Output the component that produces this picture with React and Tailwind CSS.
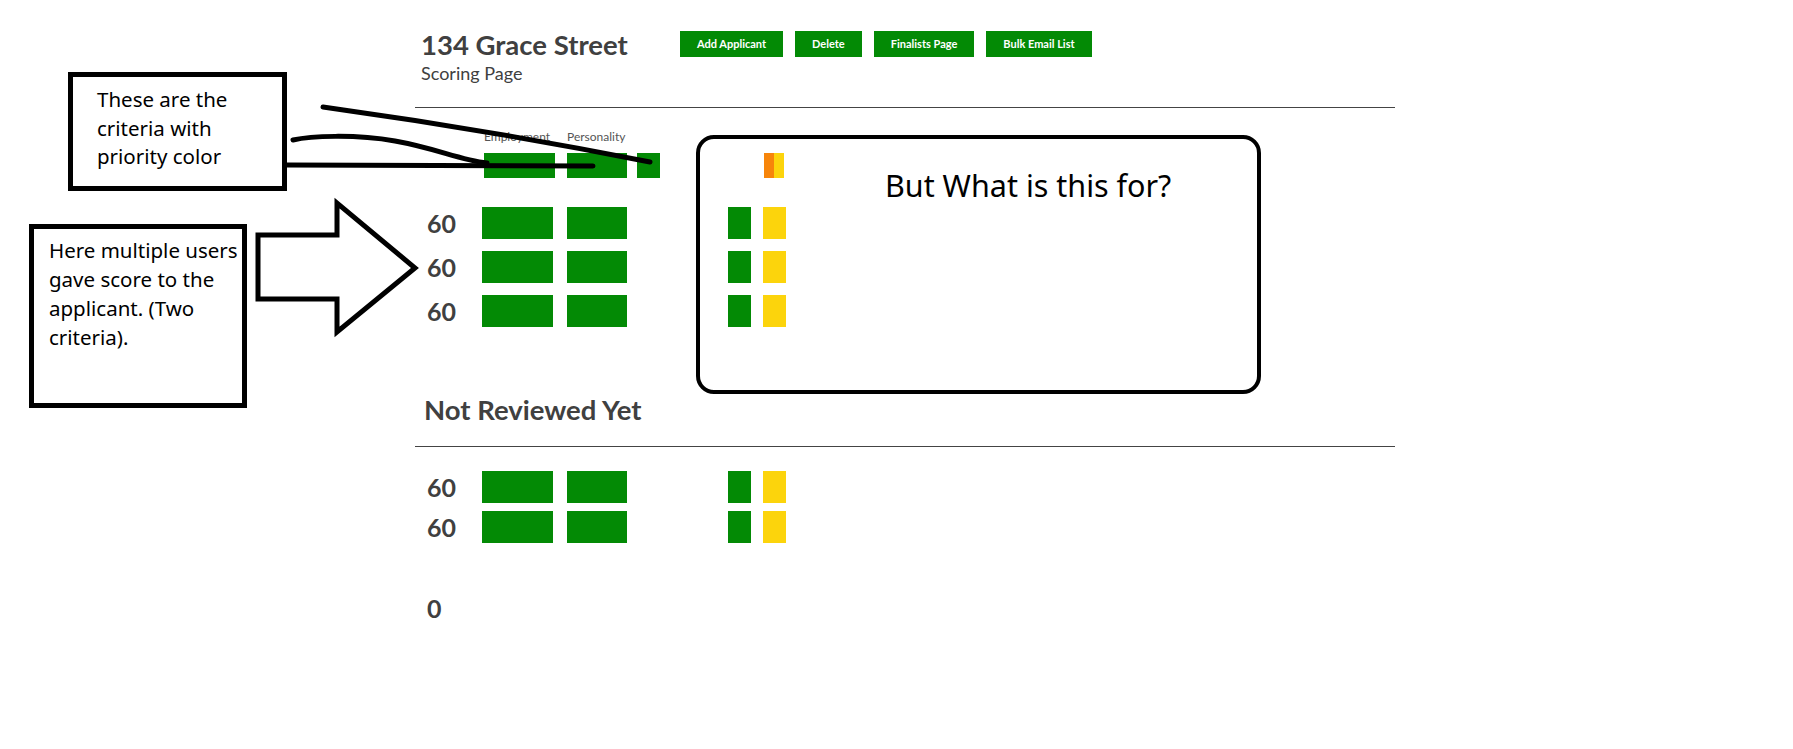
import React from 'react';

const GREEN = 'bg-[#038a05]';

const ScoreRow = ({ score, bars = true, className = '' }) => (
  <div className={`flex h-[32px] items-center ${className}`}>
    <div className="w-[67px] shrink-0 pl-[12px] text-[25px] font-bold leading-none text-[#404040]">{score}</div>
    {bars && (
      <>
        <div className={`h-[32px] w-[71px] ${GREEN}`} />
        <div className={`ml-[14px] h-[32px] w-[60px] ${GREEN}`} />
        <div className={`ml-[101px] h-[32px] w-[23px] ${GREEN}`} />
        <div className="ml-[12px] h-[32px] w-[23px] bg-[#fcd40c]" />
      </>
    )}
  </div>
);

const App = () => {
  const buttons = ['Add Applicant', 'Delete', 'Finalists Page', 'Bulk Email List'];

  return (
    <div className="relative min-h-[749px] w-full overflow-hidden bg-white font-[Lato,sans-serif]">
      {/* Page */}
      <div className="ml-[415px] w-[980px]">
        {/* Header */}
        <div className="flex h-[108px] border-b border-[#444] pt-[28px]">
          <div className="w-[265px] shrink-0 pl-[6px]">
            <h1 className="text-[27.5px] font-bold leading-[1.2] text-[#404040]">134 Grace Street</h1>
            <p className="mt-[2px] text-[18px] leading-[1.2] text-[#404040]">Scoring Page</p>
          </div>
          <div className="mt-[3px] flex gap-3">
            {buttons.map((b) => (
              <button
                key={b}
                className={`h-[26px] px-[17px] text-[11px] font-bold text-white ${GREEN}`}
              >
                {b}
              </button>
            ))}
          </div>
        </div>

        {/* Criteria header */}
        <div className="mt-[22px] flex items-end pl-[69px]">
          <div className="flex w-[71px] flex-col">
            <span className="text-[12px] leading-[1.2] text-[#555]">Employment</span>
            <div className={`mt-[9px] h-[25px] w-[71px] ${GREEN}`} />
          </div>
          <div className="ml-[12px] flex w-[60px] flex-col">
            <span className="text-[12px] leading-[1.2] text-[#555]">Personality</span>
            <div className={`mt-[9px] h-[25px] w-[60px] ${GREEN}`} />
          </div>
          <div className={`ml-[10px] h-[25px] w-[23px] ${GREEN}`} />
          <div className="ml-[104px] flex h-[25px] w-[20px]">
            <div className="w-[10px] bg-[#f7850a]" />
            <div className="w-[10px] bg-[#fcd40c]" />
          </div>
        </div>

        {/* Reviewed */}
        <div className="mt-[29px] flex flex-col gap-[12px]">
          <ScoreRow score="60" />
          <ScoreRow score="60" />
          <ScoreRow score="60" />
        </div>

        {/* Not reviewed */}
        <div className="mt-[66px] border-b border-[#444] pb-[20px] pl-[9px]">
          <h2 className="text-[27.5px] font-bold leading-[1.2] text-[#404040]">Not Reviewed Yet</h2>
        </div>
        <div className="mt-[24px] flex flex-col gap-[8px]">
          <ScoreRow score="60" />
          <ScoreRow score="60" />
        </div>
        <ScoreRow score="0" bars={false} className="mt-[49px]" />
      </div>

      {/* Annotations */}
      <div className="absolute left-[68px] top-[72px] h-[119px] w-[219px] border-[5px] border-black pl-[24px] pt-[8px] font-['Noto_Sans',sans-serif] text-[20.5px] leading-[28.5px] text-black">
        <span className="block whitespace-nowrap">These are the</span>
        <span className="block whitespace-nowrap">criteria with</span>
        <span className="block whitespace-nowrap">priority color</span>
      </div>

      <div className="absolute left-[29px] top-[224px] h-[184px] w-[218px] border-[5px] border-black pl-[15px] pt-[7px] font-['Noto_Sans',sans-serif] text-[20.5px] leading-[29px] text-black">
        <span className="block whitespace-nowrap">Here multiple users</span>
        <span className="block whitespace-nowrap">gave score to the</span>
        <span className="block whitespace-nowrap">applicant. (Two</span>
        <span className="block whitespace-nowrap">criteria).</span>
      </div>

      <div className="absolute left-[696px] top-[135px] h-[259px] w-[565px] rounded-[18px] border-4 border-black" />
      <div className="absolute left-[885px] top-[170px] whitespace-nowrap font-['Noto_Sans',sans-serif] text-[30.5px] leading-none text-black">
        But What is this for?
      </div>

      <svg className="pointer-events-none absolute left-0 top-0" width="1793" height="749" viewBox="0 0 1793 749">
        <g fill="none" stroke="#000" strokeWidth="5" strokeLinecap="round">
          <path d="M323,107 Q486,129.5 650,162" />
          <path d="M293,140 C310,136 355,134 395,141 S460,160 487,163" />
          <path d="M287,165 L593,166" />
        </g>
        <polygon
          points="258,235 337,235 337,203 415,268 337,332 337,299 258,299"
          fill="#fff"
          stroke="#000"
          strokeWidth="5"
          strokeLinejoin="miter"
        />
      </svg>
    </div>
  );
};

export default App;
